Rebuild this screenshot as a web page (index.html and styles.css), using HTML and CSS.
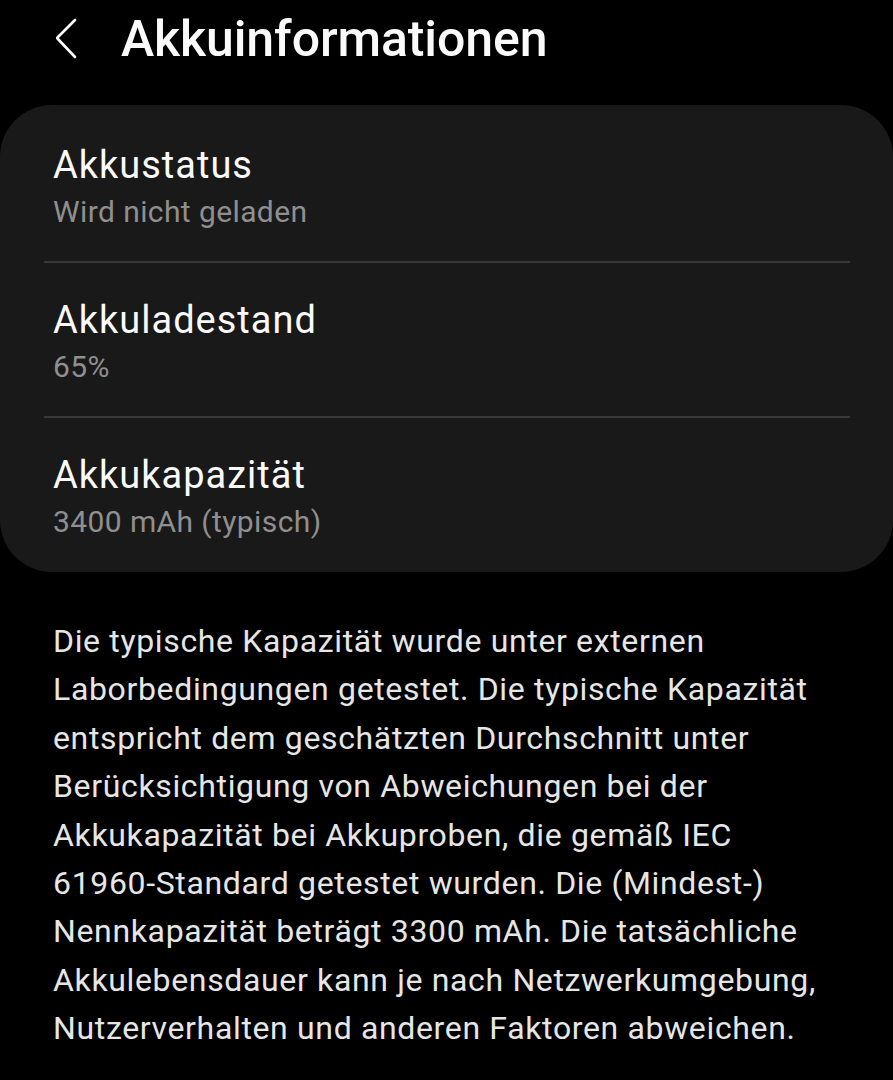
FILE: index.html
```html
<!DOCTYPE html>
<html lang="de">

<head>
  <meta charset="UTF-8">
  <meta name="viewport" content="width=device-width, initial-scale=1.0">
  <title>Akkuinformationen</title>
  <link rel="stylesheet" href="styles.css">
</head>

<body>
  <div id="root">
    <header class="app-bar">
      <svg class="back-icon" width="24" height="42" viewBox="0 0 24 42">
        <path d="M19 3 L1 21 L19 40" fill="none" stroke="#fff" stroke-width="2.6" stroke-linecap="round" stroke-linejoin="round" />
      </svg>
      <h1 class="app-title">Akkuinformationen</h1>
    </header>

    <section class="card">
      <div class="item">
        <div class="item-title">Akkustatus</div>
        <div class="item-sub">Wird nicht geladen</div>
      </div>
      <div class="item">
        <div class="item-title">Akkuladestand</div>
        <div class="item-sub">65%</div>
      </div>
      <div class="item">
        <div class="item-title">Akkukapazität</div>
        <div class="item-sub">3400 mAh (typisch)</div>
      </div>
    </section>

    <p class="note">
      Die typische Kapazität wurde unter externen<br>
      Laborbedingungen getestet. Die typische Kapazität<br>
      entspricht dem geschätzten Durchschnitt unter<br>
      Berücksichtigung von Abweichungen bei der<br>
      Akkukapazität bei Akkuproben, die gemäß IEC<br>
      61960-Standard getestet wurden. Die (Mindest-)<br>
      Nennkapazität beträgt 3300 mAh. Die tatsächliche<br>
      Akkulebensdauer kann je nach Netzwerkumgebung,<br>
      Nutzerverhalten und anderen Faktoren abweichen.
    </p>
  </div>
</body>

</html>
```

FILE: styles.css
```css
* {
  margin: 0;
  padding: 0;
  box-sizing: border-box;
}

body {
  background-color: #000;
  font-family: Roboto, "Noto Sans", sans-serif;
  color: #fafafa;
  overflow-x: hidden;
}

#root {
  width: 893px;
}

.app-bar {
  display: flex;
  align-items: center;
  gap: 41px;
  padding: 9px 0 0 56px;
  height: 69px;
}

.back-icon {
  flex-shrink: 0;
  margin-top: -2px;
}

.app-title {
  font-size: 50px;
  font-weight: 500;
  line-height: 60px;
  letter-spacing: -0.1px;
}

.card {
  margin-top: 36px;
  background-color: #191919;
  border-radius: 52px;
  padding: 2px 0 1px;
}

.item {
  margin: 0 43px 0 44px;
  padding: 35px 9px 25px;
}

.item+.item {
  border-top: 2px solid #383838;
  padding-top: 34px;
}

.item-title {
  font-size: 38px;
  line-height: 46px;
  letter-spacing: 1px;
  color: #fafafa;
}

.item-sub {
  font-size: 30px;
  line-height: 48px;
  letter-spacing: 0.4px;
  color: #8f8f8f;
}

.note {
  margin-top: 45px;
  padding-left: 53px;
  font-size: 32px;
  line-height: 48.4px;
  letter-spacing: 0.65px;
  color: #e6e6e6;
  white-space: nowrap;
}
```
